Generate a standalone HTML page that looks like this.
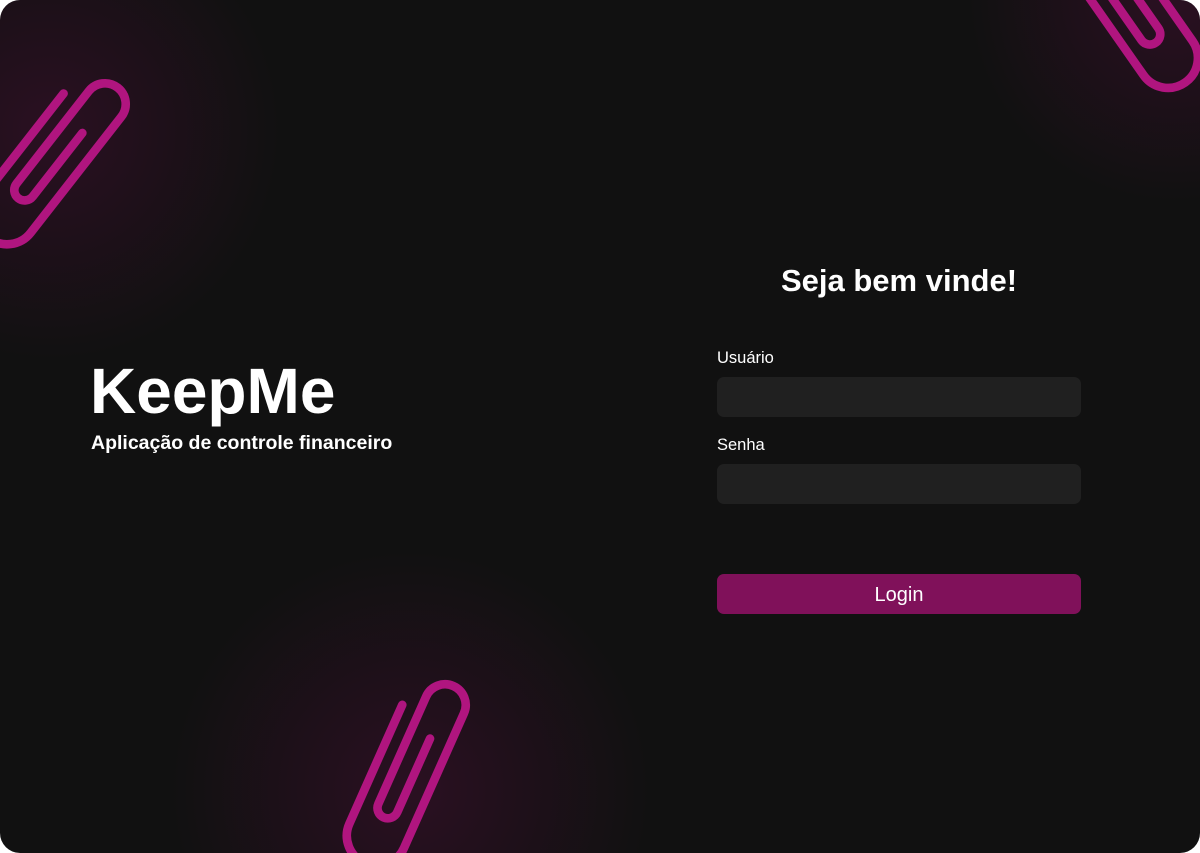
<!DOCTYPE html>
<html><head><meta charset="utf-8"><style>
html,body{margin:0;padding:0;background:#fff;overflow:hidden;width:1200px;height:853px;}
#p{position:relative;width:1200px;height:853px;border-radius:20px;overflow:hidden;background:#111111;font-family:"Liberation Sans",sans-serif;color:#fff;}
.g{position:absolute;border-radius:50%;}
svg.c{position:absolute;left:0;top:0;}
.t1{position:absolute;left:90px;top:354px;font-size:64px;font-weight:bold;line-height:74px;}
.t2{position:absolute;left:91px;top:431px;font-size:19.5px;font-weight:bold;line-height:24px;}
h1{position:absolute;left:717px;width:364px;top:261px;margin:0;text-align:center;font-size:31px;line-height:40px;}
.l{position:absolute;left:717px;font-size:16.5px;line-height:20px;}
.i{position:absolute;left:717px;width:364px;height:40px;border-radius:7px;background:#202020;}
.b{position:absolute;left:717px;width:364px;top:574px;height:40px;border-radius:7px;background:#80115a;text-align:center;line-height:42px;font-size:20px;}
</style></head><body><div id="p">
<div class="g" style="left:-200px;top:-120px;width:500px;height:500px;background:radial-gradient(circle,rgba(60,15,45,.6),rgba(17,17,17,0) 65%);"></div>
<div class="g" style="left:150px;top:530px;width:520px;height:520px;background:radial-gradient(circle,rgba(60,15,45,.6),rgba(17,17,17,0) 65%);"></div>
<div class="g" style="left:950px;top:-230px;width:450px;height:450px;background:radial-gradient(circle,rgba(60,15,45,.6),rgba(17,17,17,0) 65%);"></div>
<svg class="c" width="1200" height="853" viewBox="0 0 1200 853">
<defs><path id="clip" d="M0 45 L0 158 A26 26 0 0 0 52 158 L52 30 A18 18 0 0 0 16 30 L16 132 A9 9 0 0 0 34 132 L34 62" fill="none" stroke="#b0157f" stroke-width="7.5" stroke-linecap="round" stroke-linejoin="round"/></defs>
<use href="#clip" transform="translate(105,104) rotate(38) scale(1.15) translate(-34,-30)"/>
<use href="#clip" transform="translate(445,705) rotate(24) scale(1.15) translate(-34,-30)"/>
<use href="#clip" transform="translate(1168,58) rotate(-35) scale(1.15) translate(-26,-158)"/>
</svg>
<div class="t1">KeepMe</div>
<div class="t2">Aplicação de controle financeiro</div>
<h1>Seja bem vinde!</h1>
<div class="l" style="top:348px;">Usuário</div>
<div class="i" style="top:377px;"></div>
<div class="l" style="top:435px;">Senha</div>
<div class="i" style="top:464px;"></div>
<div class="b">Login</div>
</div></body></html>
